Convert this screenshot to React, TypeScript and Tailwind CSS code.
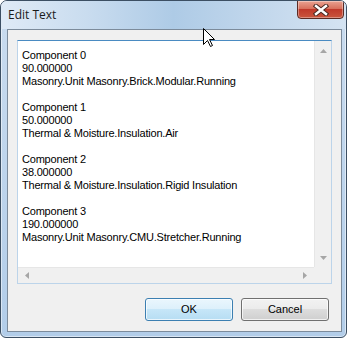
import React from "react";

const lines = [
  "Component 0",
  "90.000000",
  "Masonry.Unit Masonry.Brick.Modular.Running",
  "",
  "Component 1",
  "50.000000",
  "Thermal & Moisture.Insulation.Air",
  "",
  "Component 2",
  "38.000000",
  "Thermal & Moisture.Insulation.Rigid Insulation",
  "",
  "Component 3",
  "190.000000",
  "Masonry.Unit Masonry.CMU.Stretcher.Running",
];

const Arrow: React.FC<{ dir: "up" | "down" | "left" | "right" }> = ({ dir }) => {
  const pts = {
    up: "0,4 3.5,0 7,4",
    down: "0,0 3.5,4 7,0",
    left: "4,0 0,3.5 4,7",
    right: "0,0 4,3.5 0,7",
  }[dir];
  const vertical = dir === "up" || dir === "down";
  return (
    <svg width={vertical ? 7 : 4} height={vertical ? 4 : 7} viewBox={vertical ? "0 0 7 4" : "0 0 4 7"}>
      <polygon points={pts} fill="#a6a6a6" />
    </svg>
  );
};

const App: React.FC = () => {
  return (
    <div className="relative w-[349px] h-[339px] bg-white font-['Liberation_Sans',Arial,sans-serif] text-black">
      {/* WINDOW */}
      <div className="w-[347px] h-[338px] flex flex-col rounded-t-[7px] rounded-b-[6px] border border-[#3c4f63] bg-gradient-to-b from-[#cadcef] to-[#b2cde9] shadow-[inset_0_0_0_1px_rgba(255,255,255,0.5)] overflow-hidden">
        {/* TITLE BAR */}
        <div className="h-[28px] flex items-start bg-[linear-gradient(90deg,#dfeaf6_0%,#c9dcef_25%,#aecbe6_50%,#c2d7ec_75%,#d4e3f2_100%)]">
          <span className="pl-[7px] pt-[6px] text-[12px] leading-[16px] font-['Open_Sans','Noto_Sans',sans-serif] text-[#1a1a1a]">
            Edit Text
          </span>
          <div className="ml-auto mr-[2px] -mt-[1px] w-[47px] h-[19px] rounded-b-[4px] border border-[#5b2b24] flex items-center justify-center bg-[linear-gradient(to_bottom,#eaa392_0%,#d8705c_45%,#c0392a_50%,#c9553d_100%)] shadow-[inset_0_0_0_1px_rgba(255,255,255,0.35)]">
            <svg width="16" height="12" viewBox="0 0 16 12">
              <path d="M3 2 L13 10 M13 2 L3 10" stroke="#4a2a24" strokeWidth="4.4" strokeLinecap="square" />
              <path d="M3 2 L13 10 M13 2 L3 10" stroke="#ffffff" strokeWidth="2.4" strokeLinecap="square" />
            </svg>
          </div>
        </div>

        {/* CLIENT */}
        <div className="ml-[6px] w-[335px] h-[303px] border border-[#7c8b9b] bg-[#f0f0f0] flex flex-col">
          {/* TEXT BOX */}
          <div className="mt-[10px] ml-[9px] w-[315px] h-[244px] border border-[#bcd4ea] border-t-[#4a8bc2] bg-white flex flex-col">
            <div className="flex flex-1 min-h-0">
              <div className="flex-1 pl-[4px] pt-[8px] text-[11px] leading-[13px] tracking-[-0.2px] whitespace-pre">
                {lines.map((l, i) => (
                  <div key={i} className="h-[13px]">{l}</div>
                ))}
              </div>
              <div className="w-[17px] bg-[#f0f0f0] border-l border-[#e6e6e6] flex flex-col items-center justify-between pt-[8px] pb-[7px]">
                <Arrow dir="up" />
                <Arrow dir="down" />
              </div>
            </div>
            <div className="h-[16px] flex">
              <div className="flex-1 bg-[#f0f0f0] border-t border-[#e6e6e6] flex items-center justify-between pl-[7px] pr-[7px]">
                <Arrow dir="left" />
                <Arrow dir="right" />
              </div>
              <div className="w-[17px] bg-[#f0f0f0]" />
            </div>
          </div>

          {/* BUTTONS */}
          <div className="mt-[14px] flex justify-end gap-[8px] pr-[12px]">
            <button className="w-[88px] h-[23px] rounded-[3px] border border-[#3c7fb1] bg-[linear-gradient(to_bottom,#eaf6fd_0%,#dcf0fb_50%,#c6e6f8_50%,#b6ddf3_100%)] shadow-[inset_0_0_0_1px_rgba(255,255,255,0.7)] text-[11px] leading-[21px]">
              OK
            </button>
            <button className="w-[88px] h-[23px] rounded-[3px] border border-[#707070] bg-[linear-gradient(to_bottom,#f2f2f2_0%,#ebebeb_50%,#dddddd_50%,#cfcfcf_100%)] shadow-[inset_0_0_0_1px_rgba(255,255,255,0.7)] text-[11px] leading-[21px]">
              Cancel
            </button>
          </div>
        </div>
      </div>

      {/* MOUSE CURSOR */}
      <svg className="absolute left-[203px] top-[28px]" width="13" height="20" viewBox="0 0 13 20">
        <path d="M0.5 0.5 L0.5 16.5 L4.5 12.5 L7.5 18.5 L9.5 17.5 L6.5 11.5 L11.5 11.5 Z" fill="#ffffff" stroke="#000000" strokeWidth="1" />
      </svg>
    </div>
  );
};

export default App;
